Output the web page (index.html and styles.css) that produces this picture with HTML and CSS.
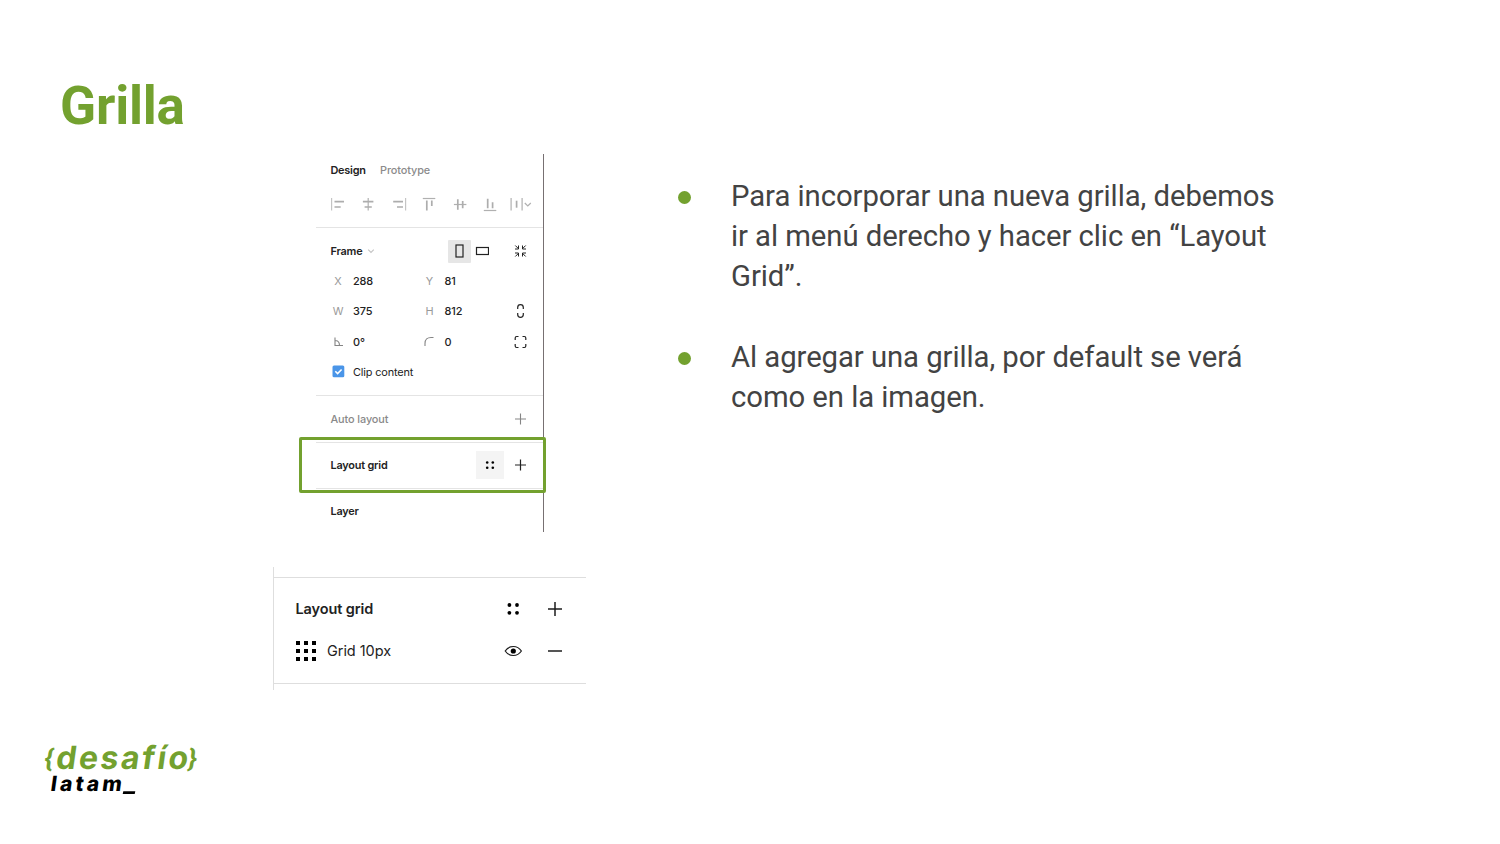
FILE: index.html
```html
<!DOCTYPE html>
<html lang="es">
<head>
<meta charset="utf-8">
<title>Grilla</title>
<link rel="stylesheet" href="styles.css">
</head>
<body>
<main class="slide">
  <h1 class="title">Grilla</h1>
  <div class="content">
    <div class="figures">
      <section class="panel">
        <nav class="tabs"><span class="tab active">Design</span><span class="tab proto">Prototype</span></nav>
        <div class="toolbar">
          <svg viewBox="323 190 30.4 30"><path class="soft" d="M331.6 198v12.500"/><path class="bar" d="M334.500 201.700h9.500M334.500 207h6.200"/></svg>
          <svg viewBox="353.4 190 30.4 30"><path class="thin" d="M368.600 198v12.500"/><path class="bar" d="M363.300 201.700h10.500M365 207h7.200"/></svg>
          <svg viewBox="383.800 190 30.400 30"><path class="soft" d="M405.400 198v12.500"/><path class="bar" d="M393 201.700h9.800M396.800 207h6"/></svg>
          <svg viewBox="414.200 190 30.400 30"><path class="thin" d="M423 198.500h12.500"/><path class="bar" d="M427 200.500v10M432 200.500v5.500"/></svg>
          <svg viewBox="444.600 190 30.400 30"><path class="thin" d="M453.500 204.500h12.500"/><path class="bar" d="M457.400 199.300v10.500M462.300 201v7.200"/></svg>
          <svg viewBox="475 190 30.400 30"><path class="thin" d="M483.800 210.500h12.500"/><path class="bar" d="M487.700 198.800v9.500M492.600 202.300v6"/></svg>
          <svg viewBox="505.400 190 30.400 30"><path class="thin" d="M511.500 198v12.500M522.500 198v12.500"/><path class="bar" d="M517 200.700v7"/><path class="thin" d="m525.200 203 3 3 3-3"/></svg>
        </div>
        <div class="section props">
          <div class="row frame-row">
            <b class="frame-name">Frame</b>
            <svg class="chev" viewBox="0 0 8 8"><path class="soft" d="m1.200 2.700 2.800 2.800 2.800-2.800"/></svg>
            <span class="orient on"><svg viewBox="0 0 14 14"><rect class="dark" x="4" y="1" width="7" height="12"/></svg></span>
            <span class="orient"><svg viewBox="0 0 14 14"><rect class="dark" x="1.500" y="3.500" width="12" height="7"/></svg></span>
            <svg class="tool" viewBox="0 0 20 20"><path class="fine" d="m4.800 4.500 3 3M8 4.500V8H4.500M15.200 4.500l-3 3M12 4.500V8h3.500M4.800 15.500l3-3M8 15.500V12H4.500M15.200 15.500l-3-3M12 15.500V12h3.500"/></svg>
          </div>
          <div class="row"><span class="key">X</span><span>288</span><span class="key">Y</span><span>81</span></div>
          <div class="row"><span class="key">W</span><span>375</span><span class="key">H</span><span>812</span>
            <svg class="tool" viewBox="0 0 20 20"><path class="dark" d="M7.200 8V6.500a2.800 2.800 0 0 1 5.600 0V8M7.200 12v1.500a2.800 2.800 0 0 0 5.600 0V12"/></svg></div>
          <div class="row"><svg class="mini" viewBox="0 0 15 15"><path class="mid" d="M4 3.500v8h8M4 6.500c3 0 4.500 2 4.500 5"/></svg><span>0°</span><svg class="mini" viewBox="0 0 15 15"><path class="mid" d="M3 12V9.500C3 5.500 5.500 3.500 9 3.500h2.500"/></svg><span>0</span>
            <svg class="tool" viewBox="0 0 20 20"><path class="dark" d="M4.700 8V6q0-1.500 1.500-1.500H8M12 4.500h1.800Q15.300 4.500 15.300 6v2M15.300 12v2q0 1.500-1.500 1.500H12M8 15.500H6.200Q4.700 15.500 4.700 14v-2"/></svg></div>
          <div class="row"><svg class="mini" viewBox="0 0 15 15"><rect x="1.500" y="1.500" width="11.800" height="11.800" rx="1.500" fill="#4a95e8"/><path d="m4.300 7.200 2.300 2.300 4-4" fill="none" stroke="#fff" stroke-width="1.600"/></svg><span class="clip">Clip content</span></div>
        </div>
        <div class="section line muted"><span>Auto layout</span><svg class="tool" viewBox="0 0 20 20"><path class="mid" d="M4.500 10h11M10 4.500v11"/></svg></div>
        <div class="section line"><span>Layout grid</span><span class="dots"><svg class="tool" viewBox="0 0 20 20"><circle cx="7.200" cy="7.500" r="1.300"/><circle cx="12.800" cy="7.500" r="1.300"/><circle cx="7.200" cy="12.800" r="1.300"/><circle cx="12.800" cy="12.800" r="1.300"/></svg></span><svg class="tool" viewBox="0 0 20 20"><path class="dark" d="M4.500 10h11M10 4.500v11"/></svg></div>
        <div class="section line last"><span>Layer</span></div>
        <div class="highlight"></div>
      </section>
      <section class="grid-panel">
        <div class="grid-body">
          <div class="grid-row"><b class="grid-title">Layout grid</b>
            <svg viewBox="0 0 20 20"><circle cx="6.400" cy="6" r="1.900"/><circle cx="14" cy="6" r="1.900"/><circle cx="6.400" cy="13.800" r="1.900"/><circle cx="14" cy="13.800" r="1.900"/></svg>
            <svg viewBox="0 0 20 20"><path class="strong" d="M3 10h14M10 3v14"/></svg></div>
          <div class="grid-row"><svg class="nine" viewBox="0 0 20 20"><path d="M0 0h4v4H0zM8 0h4v4H8zM16 0h4v4h-4zM0 8h4v4H0zM8 8h4v4H8zM16 8h4v4h-4zM0 16h4v4H0zM8 16h4v4H8zM16 16h4v4h-4z"/></svg><span class="grid-name">Grid 10px</span>
            <svg viewBox="0 0 20 20"><path class="lid" d="M2.200 10C4.300 6.800 7 5.500 10.300 5.500s6 1.300 8.100 4.500c-2.100 3.200-4.800 4.500-8.100 4.500S4.300 13.200 2.200 10z"/><circle cx="10.300" cy="10" r="2.600"/></svg>
            <svg viewBox="0 0 20 20"><path class="strong" d="M3 10h14"/></svg></div>
        </div>
      </section>
    </div>
    <ul class="points">
      <li>Para incorporar una nueva grilla, debemos<br>ir al menú derecho y hacer clic en “Layout<br>Grid”.</li>
      <li>Al agregar una grilla, por default se verá<br>como en la imagen.</li>
    </ul>
  </div>
  <footer class="footer">
    <svg class="logo" viewBox="40 738 165 62" role="img" aria-label="desafío latam">
      <g class="green">
        <text class="brace" transform="translate(43.500 767) skewX(-8)" textLength="9" lengthAdjust="spacingAndGlyphs">{</text>
        <text class="brand" transform="translate(55 769) skewX(-8)" textLength="132">desafío</text>
        <text class="brace" transform="translate(187 767) skewX(-8)" textLength="9" lengthAdjust="spacingAndGlyphs">}</text>
      </g>
      <text class="latam" transform="translate(50 791) skewX(-8)" textLength="71">latam</text>
      <path d="M123.300 791.300h12l-.6 2.700h-12z"/>
    </svg>
  </footer>
</main>
</body>
</html>
```
FILE: styles.css
```css
* { box-sizing: border-box; }
body { margin: 0; background: #fff; }
.slide { width: 1500px; height: 844px; overflow: hidden; display: flex; flex-direction: column; }
.title { margin: 0; padding: 75px 0 0 60px; height: 154px; font: 700 53px/62px Roboto, sans-serif; color: #73a12f; letter-spacing: -.2px; }
.content { display: flex; height: 536px; padding-left: 273px; }
.figures { width: 405px; }
svg { display: block; flex: none; }
.soft, .thin, .bar, .mid, .dark, .strong, .fine, .lid { fill: none; }
.soft { stroke: #c4c4c4; stroke-width: 1.200; }
.thin { stroke: #b0b0b0; stroke-width: 1.200; }
.bar { stroke: #adadad; stroke-width: 1.700; }
.mid { stroke: #858585; stroke-width: 1.100; }
.dark { stroke: #222; stroke-width: 1.200; }
.fine { stroke: #222; stroke-width: 1; }
.lid { stroke: #1c1c1c; stroke-width: 1.200; }
.strong { stroke: #1c1c1c; stroke-width: 1.500; }

/* Design inspector */
.panel { position: relative; margin-left: 43px; width: 228px; height: 378px; border-right: 1px solid #777072; font: 500 10.900px/14px Inter, sans-serif; letter-spacing: -.1px; color: #222; }
.tabs { display: flex; align-items: center; height: 32px; padding-left: 14.500px; font-weight: 600; }
.active { width: 49.500px; letter-spacing: -.25px; }
.proto { color: #8b8b8b; font-weight: 500; }
.toolbar { display: flex; height: 41px; padding: 4px 0 0 7px; }
.toolbar svg { width: 30.400px; height: 30px; }
.section { border-top: 1px solid #e4e4e4; padding-left: 14.500px; }
.props { height: 168px; padding-top: 8px; }
.row { display: grid; grid-template-columns: 22.500px 69px 22.500px 65.500px 20px; align-items: center; height: 30.200px; }
.row .tool { grid-column: 5; }
.key { width: 15px; text-align: center; color: #999; font-weight: 400; }
.mini { width: 15px; height: 15px; }
.tool { width: 20px; height: 20px; }
.tool path { transform: translateX(.5px); }
.frame-row { display: flex; }
.frame-name { width: 36px; font-weight: 600; letter-spacing: -.2px; }
.chev { width: 8px; height: 8px; }
.orient { display: flex; align-items: center; justify-content: center; width: 23px; height: 23px; }
.on { margin-left: 73px; background: #e6e6e6; border-radius: 1px; }
.orient svg { width: 14px; height: 14px; }
.frame-row .tool { margin-left: 16.500px; }
.clip { grid-column: 2 / 4; font-weight: 400; letter-spacing: -.15px; }
.line { display: flex; align-items: center; height: 46.500px; padding-right: 13px; font-weight: 600; letter-spacing: -.2px; }
.line > span:first-child { flex: 1; }
.muted { color: #898989; font-weight: 500; letter-spacing: -.1px; }
.dots { display: flex; align-items: center; justify-content: center; width: 28px; height: 28px; margin-right: 6px; background: #f4f4f4; }
.last { height: 44px; }
.highlight { position: absolute; left: -17px; top: 283px; width: 247px; height: 56px; border: 3px solid #73a12f; border-radius: 2px; }

/* Layout grid detail */
.grid-panel { width: 313px; height: 123px; margin-top: 35px; padding: 10px 0 6px; border-left: 1px solid #dedede; }
.grid-body { height: 107px; padding: 10px 21px 0 21.500px; border: solid #dedede; border-width: 1px 0; font: 400 14.500px/20px Inter, sans-serif; color: #222; }
.grid-row { display: flex; align-items: center; height: 42px; }
.grid-row svg { width: 20px; height: 20px; margin-left: 22px; }
.grid-row svg.nine { margin: 0 11.500px 0 0; }
.grid-title { width: 185.500px; font-weight: 600; letter-spacing: -.1px; }
.grid-name { width: 154px; letter-spacing: -.05px; }

/* Explanatory points */
.points { margin: 0; padding: 22px 0 0; list-style: none; font: 400 29.300px/40.200px Roboto, sans-serif; letter-spacing: -.07px; color: #434343; white-space: nowrap; }
.points li { display: block; position: relative; padding-left: 53px; margin-bottom: 40.200px; }
.points li::before { content: ""; position: absolute; left: 0; top: 15.400px; width: 13px; height: 13px; border-radius: 50%; background: #73a12f; }

.footer { padding: 48px 0 0 40px; }
.logo { width: 165px; height: 62px; }
.green { fill: #73a12f; }
.brand { font: 700 32px Inter, sans-serif; }
.brace { font: 700 25px Roboto, sans-serif; }
.latam { font: 800 21px Inter, sans-serif; }
```
